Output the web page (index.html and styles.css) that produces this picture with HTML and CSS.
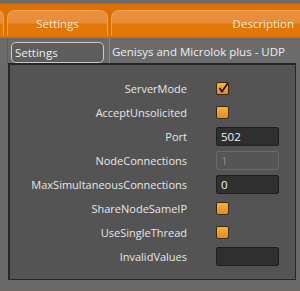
FILE: index.html
```html
<!DOCTYPE html>
<html lang="en">
<head>
    <meta charset="UTF-8">
    <title>Settings</title>
    <link rel="stylesheet" href="styles.css">
</head>
<body>
    <div class="grid">
        <div class="header-row">
            <div class="tab stub"></div>
            <div class="tab tab-name">Settings</div>
            <div class="tab tab-desc">Description</div>
        </div>
        <div class="data-row">
            <div class="cell edge"></div>
            <div class="cell name"><span class="name-box">Settings</span></div>
            <div class="cell desc">Genisys and Microlok plus - UDP</div>
        </div>
        <div class="details">
            <div class="props">
                <span class="label">ServerMode</span>
                <span class="value"><span class="check checked"><svg viewBox="0 0 13 13" width="13" height="13"><path d="M2.5 7 L5 10.5 L11 2" fill="none" stroke="#111" stroke-width="1.6"/></svg></span></span>

                <span class="label">AcceptUnsolicited</span>
                <span class="value"><span class="check"></span></span>

                <span class="label">Port</span>
                <span class="value"><span class="box">502</span></span>

                <span class="label">NodeConnections</span>
                <span class="value"><span class="box disabled">1</span></span>

                <span class="label">MaxSimultaneousConnections</span>
                <span class="value"><span class="box">0</span></span>

                <span class="label">ShareNodeSameIP</span>
                <span class="value"><span class="check"></span></span>

                <span class="label">UseSingleThread</span>
                <span class="value"><span class="check"></span></span>

                <span class="label">InvalidValues</span>
                <span class="value"><span class="box"></span></span>
            </div>
        </div>
    </div>
</body>
</html>
```

FILE: styles.css
```css
* {
    margin: 0;
    padding: 0;
    box-sizing: border-box;
}
body {
    width: 300px;
    height: 291px;
    overflow: hidden;
    background: #6b6a69;
    font-family: "Open Sans", "Noto Sans", sans-serif;
    font-size: 11px;
    color: #e6e6e6;
}
.grid {
    width: 300px;
}

/* column headers */
.header-row {
    display: flex;
    height: 35px;
    margin-top: 3px;
    padding-top: 6px;
    background: #dd7000;
    border-top: 1px solid #c86400;
    gap: 3px;
}
.tab {
    height: 26px;
    border: 1px solid #efa25a;
    border-bottom: none;
    border-radius: 8px 8px 0 0;
    background: linear-gradient(to bottom, #e9903e 0%, #e88d38 48%, #e07708 52%, #e07708 100%);
    color: #fbe9d6;
    font-size: 11.5px;
    line-height: 26px;
    text-align: center;
    flex-shrink: 0;
}
.stub {
    width: 14px;
    margin-left: -10px;
}
.tab-name {
    width: 101px;
}
.tab-desc {
    width: 200px;
    text-align: right;
    padding-right: 16px;
}

/* selected row */
.data-row {
    display: flex;
    height: 25px;
    background: #6b6b6b;
}
.cell {
    display: flex;
    align-items: center;
}
.edge {
    width: 8px;
    border-right: 1px solid #5e5e5e;
}
.name {
    width: 102px;
    padding-left: 3px;
    border-right: 1px solid #8a8a8a;
}
.name-box {
    width: 93px;
    height: 21px;
    margin-top: 4px;
    border: 1px solid #c9c9c9;
    border-radius: 5px;
    background: #5d5d5d;
    padding-left: 3px;
    line-height: 19px;
    font-size: 11.5px;
    color: #f0f0f0;
}
.desc {
    padding-left: 2px;
    padding-top: 2px;
    font-size: 11.5px;
    color: #eeeeee;
}

/* details panel */
.details {
    margin-left: 8px;
    width: 288px;
    height: 217px;
    background: #545454;
    border: 1px solid #262626;
    border-top-width: 2px;
    border-left-width: 2px;
    padding-top: 11px;
}
.props {
    display: grid;
    grid-template-columns: 177px 63px;
    grid-auto-rows: 24.1px;
    column-gap: 29px;
    align-items: center;
}
.label {
    text-align: right;
}
.value {
    display: flex;
    align-items: center;
}
.check {
    width: 13px;
    height: 13px;
    border: 1px solid #3a2a10;
    border-radius: 2px;
    background: linear-gradient(to bottom, #f8b040, #e88a10);
    position: relative;
}
.check svg {
    position: absolute;
    left: 0;
    top: -2px;
}
.box {
    width: 63px;
    height: 19px;
    border: 1px solid #1e1e1e;
    border-radius: 2px;
    background: #2f2f2f;
    padding-left: 4px;
    line-height: 17px;
    font-size: 11.5px;
    color: #f2f2f2;
}
.box.disabled {
    background: #555555;
    border-color: #6a6a6a;
    color: #8a8a8a;
}
```
